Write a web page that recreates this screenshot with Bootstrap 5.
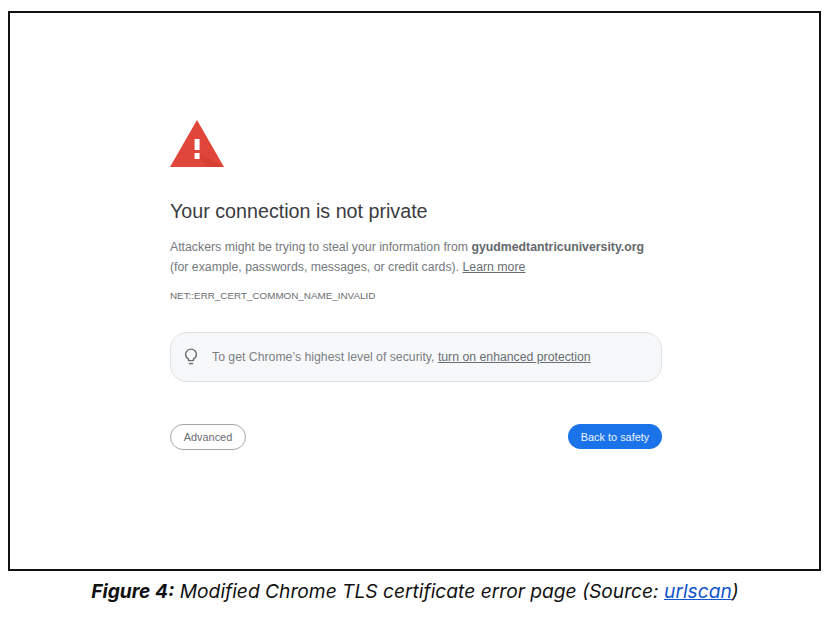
<!DOCTYPE html>
<html lang="en">
<head>
<meta charset="utf-8">
<title>Figure 4</title>
<link href="https://cdn.jsdelivr.net/npm/bootstrap@5.3.0/dist/css/bootstrap.min.css" rel="stylesheet">
<style>
html,body{height:617px;overflow:hidden;background:#fff}
.shot-wrap{padding:11px 12px 0 8px}
.shot-frame{height:560px;border:2px solid #111;background:#fff;padding:107px 157px 0 160px;font-family:"Liberation Sans",Arial,sans-serif;color:#5f6368}
.warn-icon{display:block;width:54px;height:47px}
.err-title{font-size:19.7px;font-weight:400;line-height:24px;color:#3a3b3e;margin:32px 0 0}
.err-body{font-size:12.3px;line-height:20px;margin:14px 0 0;color:#76797d;white-space:nowrap}
.err-body b{color:#65686c}
.err-body a,.tip-box a{color:#6a6d71}
.err-code{font-size:9.85px;line-height:12px;margin:13px 0 0;color:#6a6d71}
.tip-box{height:50px;margin-top:30px;border:1px solid #e0e2e6;border-radius:17px;background:#f7f8fa;padding:0 0 0 13px;font-size:12.27px;color:#7c7f83}
.tip-icon{width:14px;height:18px}
.tip-text{margin-left:14px}
.act-row{margin-top:42px}
.btn-adv,.btn-safe{font-size:10.9px;line-height:14px;border-radius:13px;padding:0;height:26px;font-family:"Liberation Sans",Arial,sans-serif}
.btn-adv{width:76px;border:1px solid #a4a8ad;color:#6a6d71;background:#fff}
.btn-safe{width:94px;height:25px;border:0;background:#1a73e8;color:#eef4fe}
.cap-line{font-family:Inter,"Liberation Sans",sans-serif;font-style:italic;font-size:19.2px;line-height:22px;color:#111;text-align:center;margin:9px 0 0;padding-left:1px;white-space:nowrap}
.cap-line a{color:#1155cc}
</style>
</head>
<body>
<div class="shot-wrap">
  <div class="shot-frame">
    <svg class="warn-icon" viewBox="0 0 54 47" aria-hidden="true">
      <path d="M27 0 54 47H0Z" fill="#e0463a"/>
      <path d="M29.5 33 54 47H38L24.5 33Z" fill="#c9372c" opacity=".35"/>
      <rect x="24.6" y="19" width="5" height="11" fill="#fff"/>
      <rect x="24.6" y="33" width="5" height="6" fill="#fff"/>
    </svg>
    <h1 class="err-title">Your connection is not private</h1>
    <p class="err-body">Attackers might be trying to steal your information from <b>gyudmedtantricuniversity.org</b><br>(for example, passwords, messages, or credit cards). <a href="#">Learn more</a></p>
    <p class="err-code">NET::ERR_CERT_COMMON_NAME_INVALID</p>
    <div class="tip-box d-flex align-items-center">
      <svg class="tip-icon" viewBox="0 0 14 18" fill="none" stroke="#6a6d71" stroke-width="1.4" aria-hidden="true">
        <path d="M4.6 12.6V11.2C3 10.2 1.6 8.7 1.6 6.5a5.4 5.4 0 0 1 10.8 0c0 2.2-1.4 3.7-3 4.7v1.4Z"/>
        <path d="M4.8 15.6h4.4"/>
      </svg>
      <span class="tip-text">To get Chrome’s highest level of security, <a href="#">turn on enhanced protection</a></span>
    </div>
    <div class="act-row d-flex justify-content-between align-items-start">
      <button type="button" class="btn btn-adv">Advanced</button>
      <button type="button" class="btn btn-safe">Back to safety</button>
    </div>
  </div>
  <p class="cap-line"><b>Figure 4:</b> Modified Chrome TLS certificate error page (Source: <a href="#">urlscan</a>)</p>
</div>
</body>
</html>
